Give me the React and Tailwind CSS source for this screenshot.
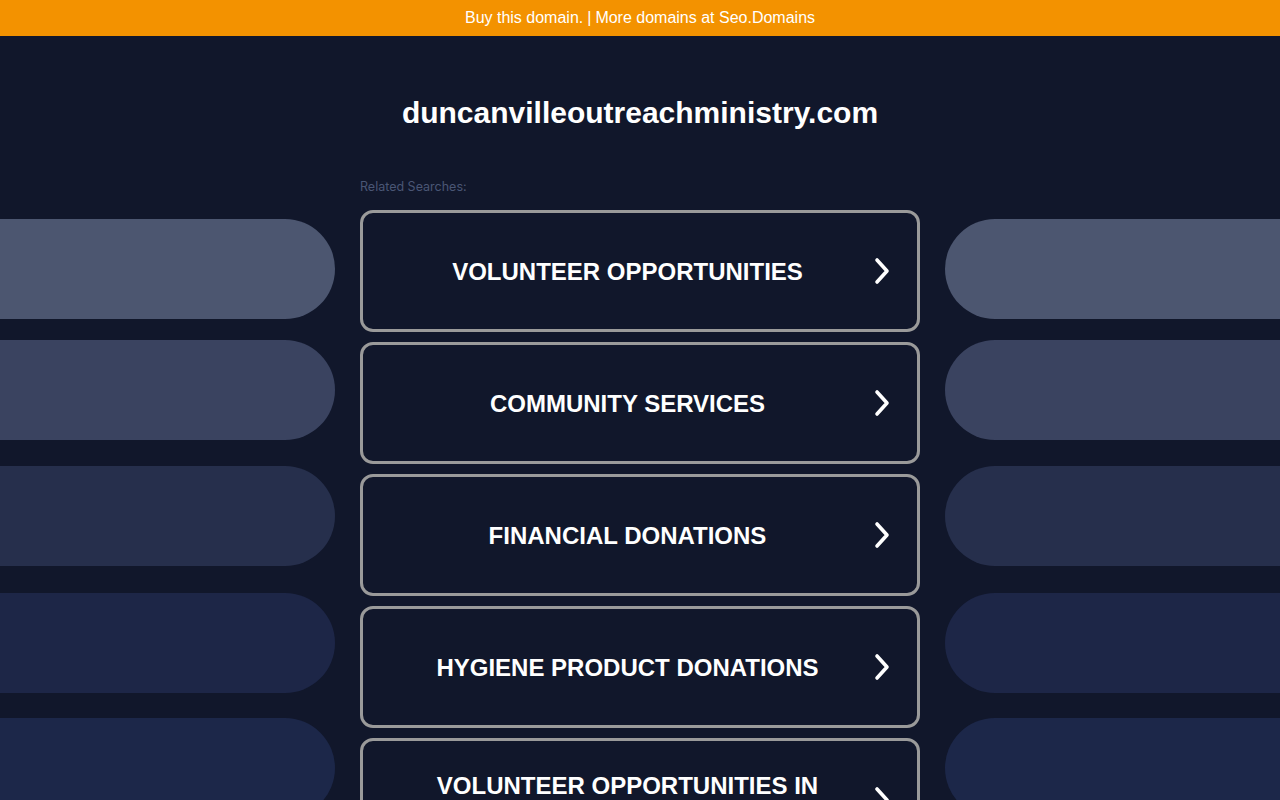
import React from "react";

const searches = [
  "VOLUNTEER OPPORTUNITIES",
  "COMMUNITY SERVICES",
  "FINANCIAL DONATIONS",
  "HYGIENE PRODUCT DONATIONS",
  "VOLUNTEER OPPORTUNITIES IN DUNCANVILLE",
];

// side decoration pills, lightest at the top
const pills = [
  { color: "bg-[#4c5670]", gap: "mt-0" },
  { color: "bg-[#3a4360]", gap: "mt-[21px]" },
  { color: "bg-[#262f4c]", gap: "mt-[26px]" },
  { color: "bg-[#1d2647]", gap: "mt-[27px]" },
  { color: "bg-[#1c2749]", gap: "mt-[25px]" },
];

const Chevron = () => (
  <svg width="20" height="28" viewBox="0 0 20 28" className="shrink-0">
    <polyline
      points="5,3 15,14 5,25"
      fill="none"
      stroke="white"
      strokeWidth="3.6"
      strokeLinecap="round"
      strokeLinejoin="round"
    />
  </svg>
);

const SearchLink = ({ label }) => (
  <a
    href="#"
    className="flex items-center min-h-[122px] py-[28px] rounded-[13px] border-[3px] border-[#9a9a9a] bg-[#11172b]"
  >
    <span className="flex-1 pl-[20px] pt-[2px] text-center text-[24px] leading-[30px] font-bold text-white">
      {label}
    </span>
    <span className="mr-[25px]">
      <Chevron />
    </span>
  </a>
);

const Pills = ({ side }) => (
  <div className="flex flex-col pt-[39px]">
    {pills.map((p, i) => (
      <div
        key={i}
        className={`h-[100px] ${p.color} ${p.gap} ${side === "left" ? "rounded-r-[50px]" : "rounded-l-[50px]"}`}
      />
    ))}
  </div>
);

export default function App() {
  return (
    <div
      className="h-screen overflow-hidden bg-[#11172b]"
      style={{ fontFamily: '"Liberation Sans", Arial, sans-serif' }}
    >
      {/* top banner */}
      <div className="h-9 bg-[#f39200] flex items-center justify-center text-[16px] text-white">
        <a href="#">Buy this domain.</a>
        <span className="mx-[4px]">|</span>
        <a href="#">More domains at Seo.Domains</a>
      </div>

      <h1 className="mt-[60px] text-center text-[30px] leading-[34px] font-bold text-white">
        duncanvilleoutreachministry.com
      </h1>

      <div className="mt-[50px] grid grid-cols-[1fr_560px_1fr] gap-x-[25px]">
        <Pills side="left" />
        <div>
          <p
            className="text-[12.5px] leading-[14px] text-[#4a5675]"
            style={{ fontFamily: "Inter, sans-serif" }}
          >
            Related Searches:
          </p>
          <div className="mt-[16px] flex flex-col gap-[10px]">
            {searches.map((s) => (
              <SearchLink key={s} label={s} />
            ))}
          </div>
        </div>
        <Pills side="right" />
      </div>
    </div>
  );
}
